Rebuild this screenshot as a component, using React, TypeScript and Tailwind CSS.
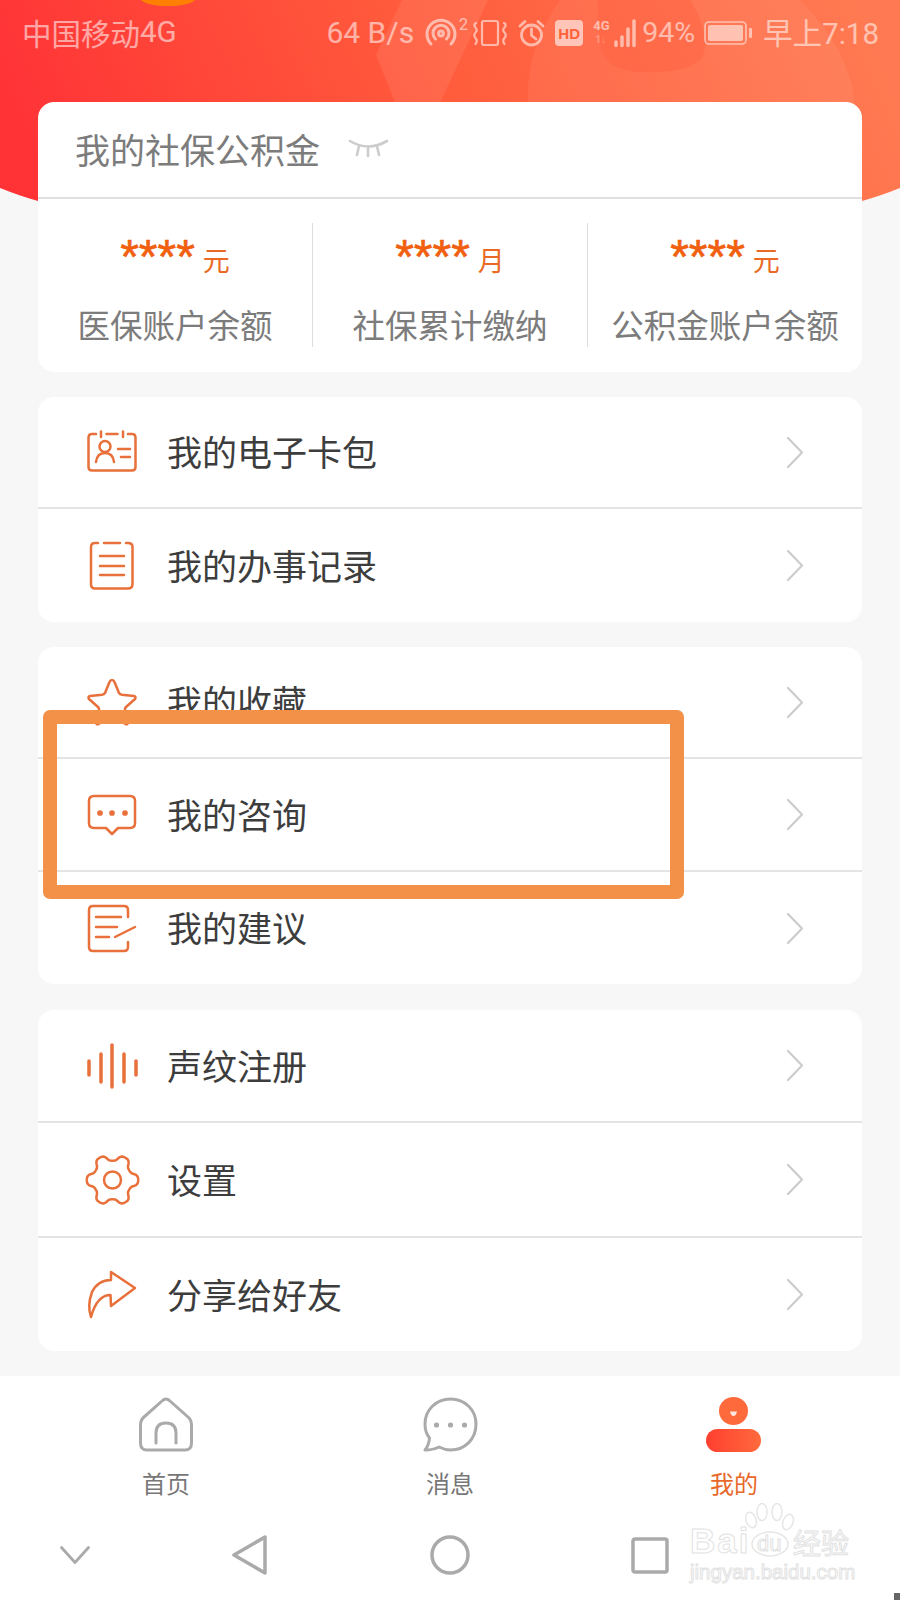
import React from "react";

const CJK = "font-['Noto_Sans_CJK_SC','Noto_Sans',sans-serif]";
const O = "#e8703a";

function Svg({ w, h, stroke = O, sw = 2.5, children, className = "" }: { w: number; h: number; stroke?: string; sw?: number; children: React.ReactNode; className?: string }) {
  return (
    <svg width={w} height={h} viewBox={`0 0 ${w} ${h}`} fill="none" stroke={stroke} strokeWidth={sw} strokeLinecap="round" strokeLinejoin="round" className={`block overflow-visible shrink-0 ${className}`}>
      {children}
    </svg>
  );
}

const CardIcon = () => (
  <Svg w={50} h={42}>
    <path d="M9 3H5Q1.5 3 1.5 6.5V36Q1.5 39.5 5 39.5H45Q48.5 39.5 48.5 36V6.5Q48.5 3 45 3H41" />
    <path d="M14 .5V6M36 .5V6M19.5 3H30.5" />
    <circle cx="18" cy="15.5" r="5.5" />
    <path d="M9 31Q10 22 18 22Q26 22 27 31M31 18H43M34 26H43" />
  </Svg>
);
const ListIcon = () => (
  <Svg w={46} h={50}>
    <path d="M9 2H6Q2 2 2 6V43Q2 47.5 6 47.5H39Q43.5 47.5 43.5 43V6Q43.5 2 39 2H37" />
    <path d="M15 2H31M11 15H35M11 25H35M11 34H35" />
  </Svg>
);
const StarIcon = () => (
  <Svg w={50} h={48}>
    <path d="M25 2Q26.5 2 27.5 4L32 15Q33 16.5 35 16.8L47 18Q49.5 19 48 21L39 29Q37.5 30.5 38 32L41 44Q41 47 38.5 46L27 40Q25 39 23 40L11.5 46Q9 47 9 44L12 32Q12.5 30.5 11 29L2 21Q.5 19 3 18L15 16.8Q17 16.5 18 15L22.5 4Q23.5 2 25 2Z" />
  </Svg>
);
const ChatIcon = () => (
  <Svg w={50} h={42}>
    <path d="M7 2H43Q48 2 48 7V29Q48 34 43 34H31L25 40L19 34H7Q2 34 2 29V7Q2 2 7 2Z" />
    <circle cx="13" cy="19" r="1.6" fill={O} />
    <circle cx="25" cy="19" r="1.6" fill={O} />
    <circle cx="38" cy="19" r="1.6" fill={O} />
  </Svg>
);
const NoteIcon = () => (
  <Svg w={50} h={49}>
    <path d="M41 13V6Q41 2 37 2H6Q2 2 2 6V43Q2 47 6 47H37Q41 47 41 43V38" />
    <path d="M9 13H34M9 23H30M9 33H22M28 33L48 23" />
  </Svg>
);
const VoiceIcon = () => (
  <Svg w={50} h={46} sw={3.5}>
    <path d="M2 18V32M14 11V39M25 2V44M37 11V39M49 18V32" />
  </Svg>
);
const gearPath = Array.from({ length: 181 }, (_, i) => {
  const t = (i / 180) * Math.PI * 2;
  const r = 22.5 + 3.2 * (Math.tanh(1.6 * Math.cos(6 * t)) / Math.tanh(1.6));
  return `${i ? "L" : "M"}${(25.5 + r * Math.cos(t)).toFixed(2)} ${(24 + r * Math.sin(t)).toFixed(2)}`;
}).join("") + "Z";
const GearIcon = () => (
  <Svg w={51} h={48}>
    <path d={gearPath} />
    <circle cx="25.5" cy="24" r="8.5" />
  </Svg>
);
const ShareIcon = () => (
  <Svg w={48} h={49}>
    <path d="M23 2L47 18L23 36L22.5 25Q9 25 3 47Q-1 36 4 22Q10 10 23 10Z" />
  </Svg>
);

const Chevron = () => (
  <Svg w={16} h={31} stroke="#cccccc" sw={2.2}>
    <path d="M1 1L15 15.5L1 30" />
  </Svg>
);

function Row({ icon, label, h, last }: { icon: React.ReactNode; label: string; h: string; last?: boolean }) {
  return (
    <div className={`flex items-center ${h} ${last ? "" : "border-b-2 border-[#e4e4e4]"}`}>
      <div className="w-[50px] ml-[49px] flex justify-center">{icon}</div>
      <span className="ml-[30px] mt-[-3px] flex-1 text-[35px] leading-none text-[#3d3d3d]">{label}</span>
      <div className="mr-[59px]"><Chevron /></div>
    </div>
  );
}

function Stat({ unit, label, border }: { unit: string; label: string; border?: boolean }) {
  return (
    <div className={`flex-1 flex flex-col items-center ${border ? "border-r border-[#dddddd]" : ""}`}>
      <div className="h-[79px] flex items-start">
        <span className="mt-[12px] font-['Liberation_Sans'] text-[48px] leading-[44px] text-[#f0600f] [-webkit-text-stroke:0.6px_#f0600f]">****</span>
        <span className="ml-[8px] mt-[21px] text-[27px] leading-[32px] text-[#ea6a25]">{unit}</span>
      </div>
      <span className="text-[32.5px] leading-[44px] text-[#7c7c7c] whitespace-nowrap">{label}</span>
    </div>
  );
}

const TabLabel = ({ children, active }: { children: string; active?: boolean }) => (
  <span className={`mt-[16px] text-[24px] leading-[30px] ${active ? "text-[#e8682a]" : "text-[#777777]"}`}>{children}</span>
);

export default function App() {
  return (
    <div className={`relative w-[900px] h-[1600px] overflow-hidden bg-[#f7f7f7] flex flex-col ${CJK}`}>
      {/* header artwork */}
      <svg width="900" height="205" viewBox="0 0 900 205" className="absolute left-0 top-0 block">
        <defs>
          <linearGradient id="hd" x1="0" y1="0.55" x2="1" y2="0.45">
            <stop offset="0" stopColor="#ff3236" />
            <stop offset="0.5" stopColor="#ff5c3c" />
            <stop offset="1" stopColor="#ff7a52" />
          </linearGradient>
        </defs>
        <path d="M0 0H900V188Q880 196 862 201H38Q20 196 0 188Z" fill="url(#hd)" />
        <path d="M402 0H488L439 105H396L376 55Z" fill="#ffffff" opacity="0.08" />
        <path d="M528 105Q525 50 560 0H800Q850 50 855 105Z" fill="#ffffff" opacity="0.06" />
        <path d="M597 0H690Q712 35 702 58Q688 74 640 72Q600 70 600 40Z" fill="#ff5c3c" opacity="0.35" />
        <ellipse cx="168" cy="-2" rx="28" ry="8" fill="#ff8000" />
      </svg>

      {/* status bar */}
      <div className="relative h-[102px] pt-[15px] pl-[22px] pr-[21px] flex items-start text-white/55">
        <div className="h-[36px] flex items-center text-[29.5px] leading-none">中国移动<span className="font-['Roboto']">4G</span></div>
        <div className="ml-auto h-[36px] flex items-center">
          <span className="font-['Roboto'] text-[30px] leading-none">64 B/s</span>
          <Svg w={41} h={28} stroke="currentColor" sw={3} className="ml-[12px]">
            <path d="M5 25A14 14 0 1 1 25 25M9.500 20A8 8 0 1 1 20.500 20" />
            <circle cx="15" cy="14.500" r="2.400" />
            <text x="33" y="11" fontSize="16" fill="currentColor" stroke="none" fontFamily="Roboto">2</text>
          </Svg>
          <Svg w={37} h={26} stroke="currentColor" sw={2.2} className="ml-[5px]">
            <rect x="10" y="1" width="16" height="24" rx="2" />
            <path d="M4 3Q1 5 3.500 7.500Q6 10 3.500 12.500Q1 15 3.500 18Q6 21 3.500 24M32 3Q35 5 32.500 7.500Q30 10 32.500 12.500Q35 15 32.500 18Q30 21 32.500 24" />
          </Svg>
          <Svg w={27} h={27} stroke="currentColor" sw={2.800} className="ml-[9px]">
            <circle cx="13.500" cy="15" r="10" />
            <path d="M13.500 9V15.500L18 19M2 6L7 1.500M25 6L20 1.500" />
          </Svg>
          <div className="ml-[10px] w-[28px] h-[26px] rounded-[4px] bg-white/60 flex items-center justify-center">
            <span className="font-['Liberation_Sans'] font-bold text-[15px] leading-none text-[#ff6238]">HD</span>
          </div>
          <div className="ml-[10px] w-[44px] h-[28px] relative">
            <span className="absolute left-0 top-0 font-['Roboto'] font-bold text-[13px] leading-[13px]">4G</span>
            <span className="absolute left-[2px] top-[15px] font-['Roboto'] font-bold text-[10px] leading-[11px] opacity-50">1↓</span>
            <Svg w={44} h={28} stroke="currentColor" sw={3.500}>
              <path d="M23 23V26.500M29 18V26.500M35 10V26.500M41 2V26.500" />
            </Svg>
          </div>
          <span className="ml-[5px] font-['Roboto'] text-[28.5px] leading-none">94%</span>
          <svg width="49" height="24" viewBox="0 0 49 24" className="ml-[9px] block">
            <rect x="1" y="1" width="41" height="22" rx="4" fill="none" stroke="currentColor" strokeWidth="1.600" />
            <rect x="4" y="4" width="35" height="16" rx="2" fill="currentColor" />
            <rect x="45" y="7" width="3" height="10" rx="1" fill="currentColor" />
          </svg>
          <span className="ml-[10px] text-[29.5px] leading-none">早上<span className="font-['Roboto']">7:18</span></span>
        </div>
      </div>

      {/* cards */}
      <div className="relative mx-[38px] flex flex-col">
        <div className="h-[270px] rounded-[16px] bg-white flex flex-col">
          <div className="h-[97px] shrink-0 border-b-2 border-[#e0e0e0] flex items-center pl-[37px]">
            <span className="text-[35px] leading-none text-[#7c7c7c] mt-[-2px]">我的社保公积金</span>
            <Svg w={41} h={16} stroke="#cccccc" sw={2.6} className="ml-[28px] mt-[-4px]">
              <path d="M2 1Q20 12 39 1M11 6L9 15M20 8V16M29 6L31 15" />
            </Svg>
          </div>
          <div className="mt-[24px] h-[124px] flex">
            <Stat unit="元" label="医保账户余额" border />
            <Stat unit="月" label="社保累计缴纳" border />
            <Stat unit="元" label="公积金账户余额" />
          </div>
        </div>

        <div className="mt-[25px] rounded-[16px] bg-white">
          <Row icon={<CardIcon />} label="我的电子卡包" h="h-[112px]" />
          <Row icon={<ListIcon />} label="我的办事记录" h="h-[113px]" last />
        </div>

        <div className="mt-[25px] rounded-[16px] bg-white">
          <Row icon={<StarIcon />} label="我的收藏" h="h-[112px]" />
          <Row icon={<ChatIcon />} label="我的咨询" h="h-[113px]" />
          <Row icon={<NoteIcon />} label="我的建议" h="h-[112px]" last />
        </div>

        <div className="mt-[26px] rounded-[16px] bg-white">
          <Row icon={<VoiceIcon />} label="声纹注册" h="h-[113px]" />
          <Row icon={<GearIcon />} label="设置" h="h-[115px]" />
          <Row icon={<ShareIcon />} label="分享给好友" h="h-[113px]" last />
        </div>
      </div>

      {/* bottom bars */}
      <div className="mt-auto h-[224px] bg-white flex flex-col relative">
        <div className="pt-[21px] px-[24px] grid grid-cols-3 h-[159px]">
          <div className="flex flex-col items-center">
            <Svg w={54} h={55} stroke="#aaaaaa" sw={3}>
              <path d="M27 2Q29 2 31 4L49 20Q52.500 23 52.500 28V46Q52.500 53 46 53H8Q1.500 53 1.500 46V28Q1.500 23 5 20L23 4Q25 2 27 2Z" />
              <path d="M17 46V36Q17 26 27 26Q37 26 37 36V46" />
            </Svg>
            <TabLabel>首页</TabLabel>
          </div>
          <div className="flex flex-col items-center">
            <Svg w={55} h={55} stroke="#aaaaaa" sw={3}>
              <path d="M27.500 2C42 2 53 13 53 27C53 42 42 53 27.500 53C22 53 19 51.500 16 50Q10 53 2 53Q6 48 6.500 41C3 37 2 32 2 27C2 13 13 2 27.500 2Z" />
              <circle cx="13.500" cy="28" r="2.600" fill="#aaaaaa" stroke="none" />
              <circle cx="27.500" cy="28" r="2.600" fill="#aaaaaa" stroke="none" />
              <circle cx="41.500" cy="28" r="2.600" fill="#aaaaaa" stroke="none" />
            </Svg>
            <TabLabel>消息</TabLabel>
          </div>
          <div className="flex flex-col items-center">
            <svg width="55" height="55" viewBox="0 0 55 55" className="block ml-[-1px]">
              <defs>
                <linearGradient id="bd" x1="0" y1="0" x2="1" y2="0">
                  <stop offset="0" stopColor="#ff3f30" />
                  <stop offset="1" stopColor="#ff6a3d" />
                </linearGradient>
              </defs>
              <ellipse cx="27.500" cy="14" rx="14.500" ry="14" fill="#ff6a3d" />
              <path d="M24 14.500H31Q30 19 27.500 19Q25 19 24 14.500Z" fill="#ffe6dc" />
              <rect x="0" y="32" width="55" height="23" rx="11.500" fill="url(#bd)" />
            </svg>
            <TabLabel active>我的</TabLabel>
          </div>
        </div>
        <div className="flex items-center h-[40px] pl-[60px]">
          <Svg w={30} h={18} stroke="#aaaaaa" sw={2.800}>
            <path d="M1.500 1.500L15 16.500L28.500 1.500" />
          </Svg>
          <Svg w={35} h={40} stroke="#aaaaaa" sw={3.500} className="ml-[142px]">
            <path d="M33 2V38L2 20Z" />
          </Svg>
          <Svg w={40} h={40} stroke="#aaaaaa" sw={3.500} className="ml-[163px]">
            <circle cx="20" cy="20" r="18" />
          </Svg>
          <Svg w={38} h={37} stroke="#aaaaaa" sw={3.500} className="ml-[161px]">
            <rect x="2" y="2" width="34" height="33" rx="2" />
          </Svg>
        </div>

        {/* watermark */}
        <div className="absolute left-[690px] top-[127px] w-[165px] h-[80px] text-transparent">
          <svg width="50" height="54" viewBox="0 0 50 54" fill="none" stroke="#e6e6e6" strokeWidth="1.500" className="absolute left-[55px] top-0 block">
            <ellipse cx="6" cy="17" rx="5" ry="8" transform="rotate(-20 6 17)" />
            <ellipse cx="17" cy="9" rx="5" ry="8.500" />
            <ellipse cx="32" cy="9" rx="5" ry="8.500" />
            <ellipse cx="43" cy="19" rx="5" ry="8" transform="rotate(20 43 19)" />
            <ellipse cx="25" cy="41" rx="18" ry="12" />
          </svg>
          <span className="absolute left-[67px] top-[29px] font-['Liberation_Sans'] text-[22px] leading-[24px] [-webkit-text-stroke:1px_#e2e2e2]">du</span>
          <span className="absolute left-0 top-[18px] font-['Liberation_Sans'] font-bold text-[35px] leading-[40px] tracking-[2px] [-webkit-text-stroke:1px_#e2e2e2]">Bai</span>
          <span className="absolute left-[103px] top-[23px] text-[28px] leading-[32px] [-webkit-text-stroke:1px_#e2e2e2]">经验</span>
          <span className="absolute left-0 top-[57px] font-['Liberation_Sans'] text-[20.5px] leading-[24px] [-webkit-text-stroke:1px_#e2e2e2] whitespace-nowrap">jingyan.baidu.com</span>
        </div>
        <div className="absolute right-0 bottom-0 w-[6px] h-[7px] bg-[#666666]" />
      </div>

      {/* annotation rectangle */}
      <div className="absolute left-[43px] top-[710px] w-[641px] h-[189px] border-[14px] border-[#f39149] rounded-[7px]" />
    </div>
  );
}
